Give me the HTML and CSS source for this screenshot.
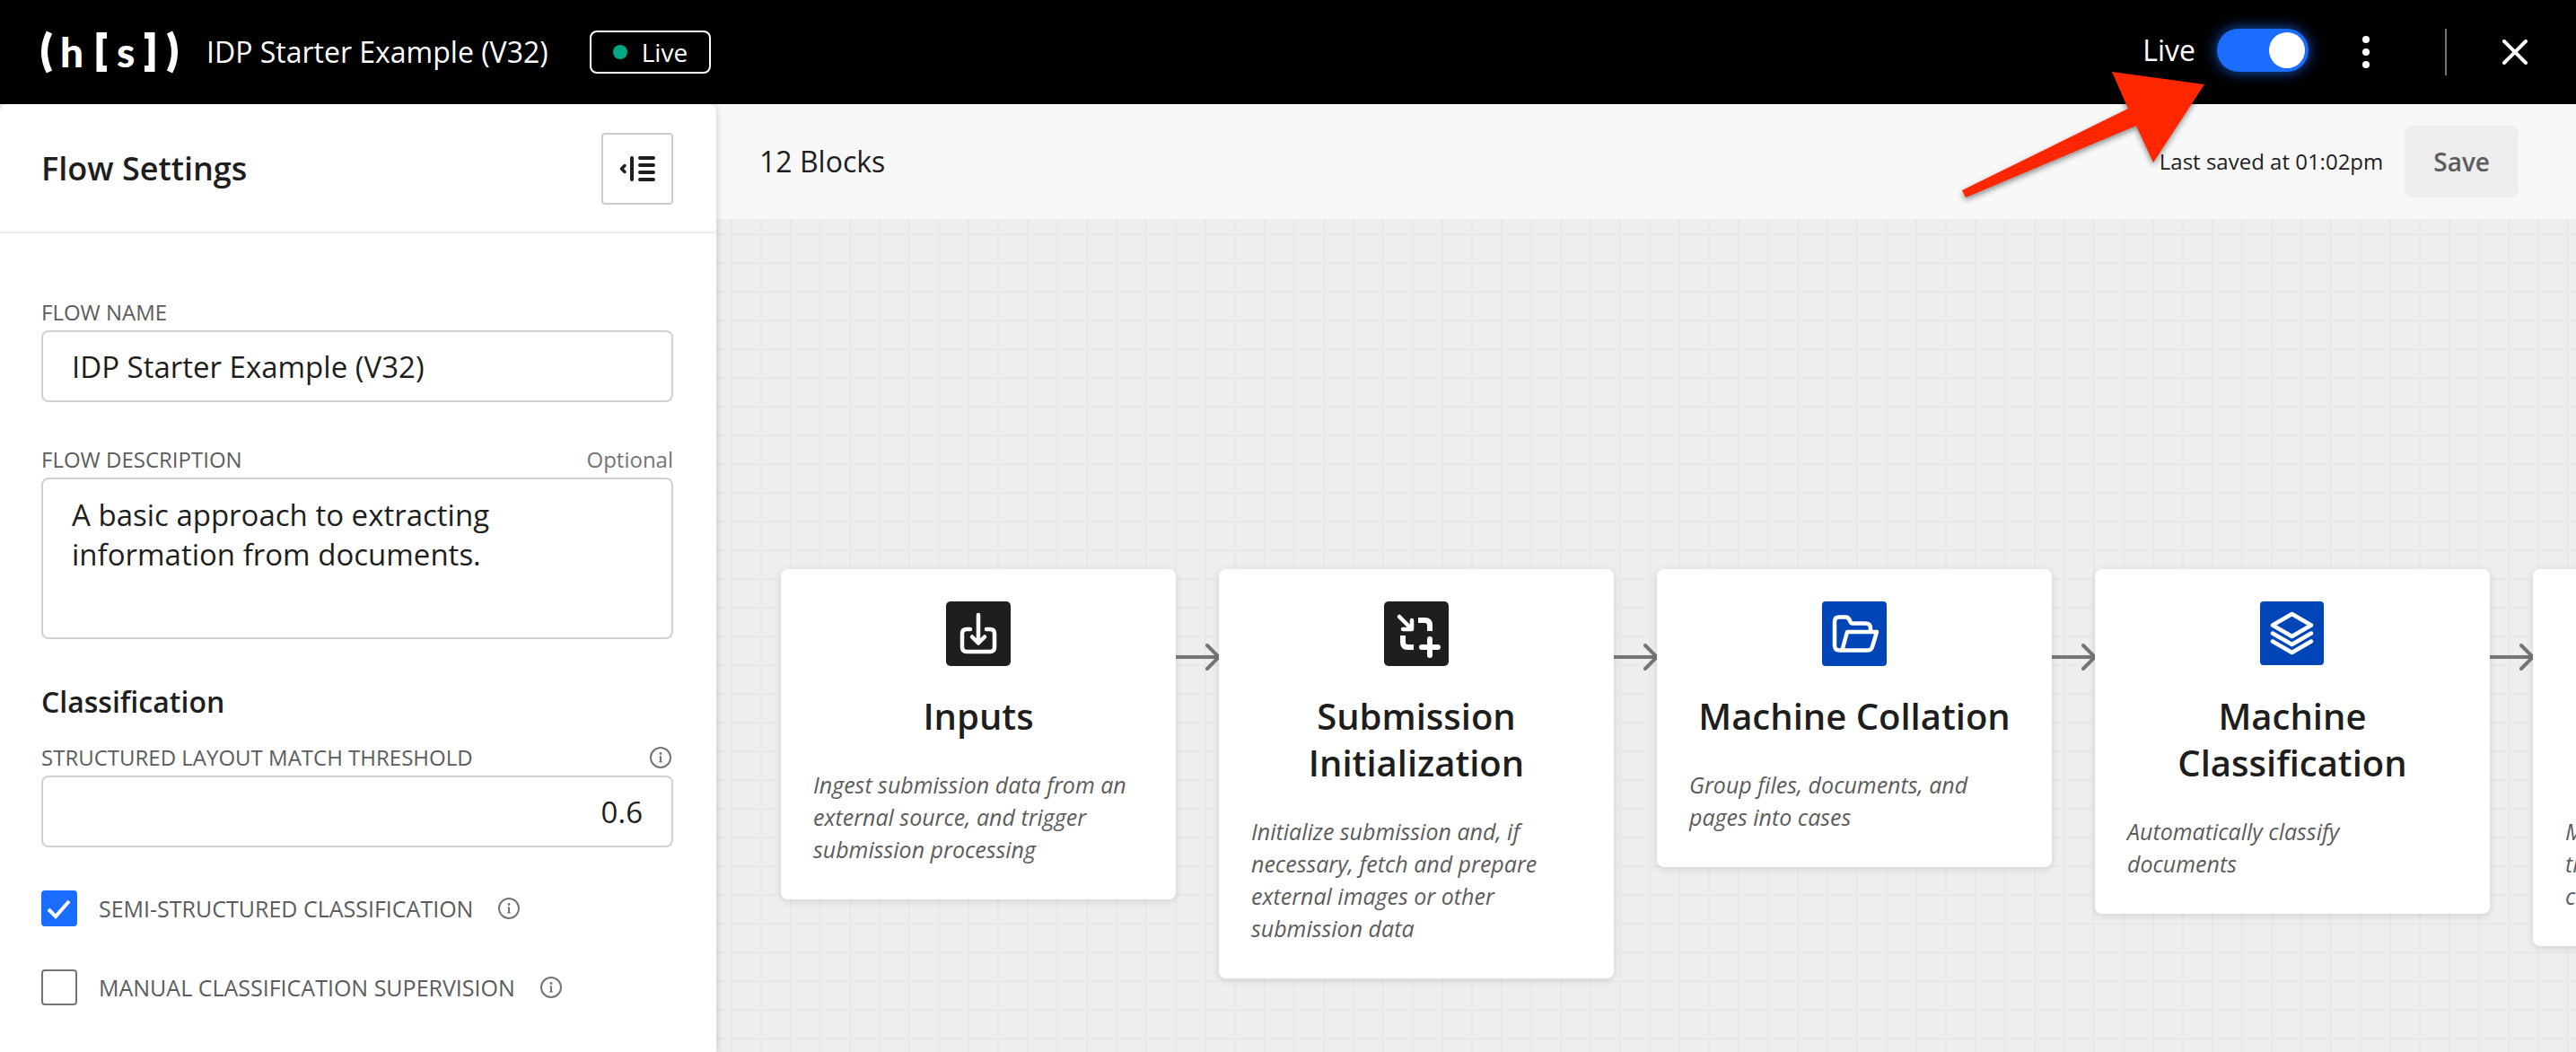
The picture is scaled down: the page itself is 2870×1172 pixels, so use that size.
FILE: index.html
```html
<!DOCTYPE html>
<html lang="en">
<head>
<meta charset="utf-8">
<title>IDP Starter Example (V32)</title>
<meta name="viewport" content="width=device-width, initial-scale=1">
<link rel="stylesheet" href="styles.css">
</head>
<body>
<svg class="sprite" aria-hidden="true">
  <symbol id="info" viewBox="0 0 24 24">
    <circle cx="12" cy="12" r="11" fill="none" stroke="currentColor" stroke-width="2"/>
    <path d="M12 10.500V17" fill="none" stroke="currentColor" stroke-width="2"/>
    <path d="M10.500 11H12M10 17h4" fill="none" stroke="currentColor" stroke-width="1"/>
    <circle cx="12" cy="7.500" r="1.400" fill="currentColor"/>
  </symbol>
  <symbol id="arrow" viewBox="0 0 48 32">
    <path d="M0 16H47" fill="none" stroke="currentColor" stroke-width="4"/>
    <path d="M35 3L48 16L35 29" fill="none" stroke="currentColor" stroke-width="4" stroke-linecap="round" stroke-linejoin="round"/>
  </symbol>
</svg>

<header class="topbar">
  <svg class="logo" viewBox="0 -10 152 64" role="img" aria-label="(h[s])">
    <g fill="none" stroke="#fff">
      <path d="M9 0Q-2 22 9 44" stroke-width="7"/>
      <path d="M73 3.500H65V40.500H73" stroke-width="7"/>
      <path d="M115 3.500H123V40.500H115" stroke-width="7"/>
      <path d="M143 0Q154 22 143 44" stroke-width="7"/>
    </g>
    <text class="logo-text" x="21" y="39">h</text>
    <text class="logo-text" x="84" y="39">s</text>
  </svg>
  <h1 class="topbar-title">IDP Starter Example (V32)</h1>
  <span class="badge"><span class="badge-dot"></span>Live</span>
  <div class="topbar-actions">
    <label class="switch">Live <input class="switch-input" type="checkbox" role="switch" checked></label>
    <button class="icon-button" type="button" aria-label="More options">
      <svg width="8" height="36" viewBox="0 0 8 36" fill="#fff"><circle cx="4" cy="4" r="4"/><circle cx="4" cy="18" r="4"/><circle cx="4" cy="32" r="4"/></svg>
    </button>
    <span class="topbar-divider"></span>
    <button class="icon-button" type="button" aria-label="Close">
      <svg width="28" height="28" viewBox="0 0 28 28" fill="none" stroke="#fff" stroke-width="4" stroke-linecap="round"><path d="M2 2L26 26M26 2L2 26"/></svg>
    </button>
  </div>
  <svg class="pointer" viewBox="0 0 290 160" aria-hidden="true">
    <path d="M276 24L173 10L191 51L6 142L10 150L200 70L219 111Z" fill="#ff2600"/>
  </svg>
</header>

<div class="workspace">
  <aside class="sidebar">
    <div class="sidebar-head">
      <h2 class="sidebar-title">Flow Settings</h2>
      <button class="collapse" type="button" aria-label="Collapse panel">
        <svg width="40" height="28" viewBox="0 0 40 28" fill="none" stroke="#1e1e1e" stroke-width="4" stroke-linecap="round" stroke-linejoin="round"><path d="M6 10.500L2.500 14L6 17.500" stroke-width="3.500"/><path d="M14 2V26M23 2H38M23 10H38M23 18H38M23 26H38"/></svg>
      </button>
    </div>
    <form class="settings">
      <div class="field">
        <div class="field-head"><label for="flow-name">FLOW NAME</label></div>
        <input class="control" id="flow-name" type="text" value="IDP Starter Example (V32)">
      </div>
      <div class="field">
        <div class="field-head"><label for="flow-description">FLOW DESCRIPTION</label><span class="optional">Optional</span></div>
        <textarea class="control control-area" id="flow-description">A basic approach to extracting information from documents.</textarea>
      </div>
      <section class="group">
        <h3 class="group-title">Classification</h3>
        <div class="field">
          <div class="field-head"><label for="threshold">STRUCTURED LAYOUT MATCH THRESHOLD</label><svg class="info info-end"><use href="#info"/></svg></div>
          <input class="control control-number" id="threshold" type="text" inputmode="decimal" value="0.6">
        </div>
      </section>
      <div class="check">
        <input class="check-input" id="semi" type="checkbox" checked>
        <label for="semi">SEMI-STRUCTURED CLASSIFICATION</label>
        <svg class="info"><use href="#info"/></svg>
      </div>
      <div class="check">
        <input class="check-input" id="manual" type="checkbox">
        <label for="manual">MANUAL CLASSIFICATION SUPERVISION</label>
        <svg class="info"><use href="#info"/></svg>
      </div>
    </form>
  </aside>

  <main class="main">
    <div class="toolbar">
      <p class="count">12 Blocks</p>
      <p class="saved">Last saved at 01:02pm</p>
      <button class="save" type="button" disabled>Save</button>
    </div>
    <div class="canvas">
      <div class="flow">
        <article class="block">
          <svg class="block-icon" viewBox="0 0 72 72"><rect width="72" height="72" rx="5" fill="#1e1e1e"/><g fill="none" stroke="#fff" stroke-width="4.500" stroke-linecap="round" stroke-linejoin="round"><path d="M27 31H23q-5 0-5 5V51q0 5 5 5H49q5 0 5-5V36q0-5-5-5H45"/><path d="M36 15V46M29 39.500L36 46.500L43 39.500"/></g></svg>
          <h2 class="block-title">Inputs</h2>
          <p class="block-text">Ingest submission data from an external source, and trigger submission processing</p>
        </article>
        <svg class="arrow"><use href="#arrow"/></svg>
        <article class="block">
          <svg class="block-icon" viewBox="0 0 72 72"><rect width="72" height="72" rx="5" fill="#1e1e1e"/><g fill="none" stroke="#fff" stroke-width="6"><path d="M17 17L30 30M31 21V31H21" stroke-width="4.500" stroke-linecap="round" stroke-linejoin="round"/><path d="M38 21H45.500q5.500 0 5.500 5.500V33"/><path d="M21 38V45.500q0 5.500 5.500 5.500H33"/><path d="M51 42V60M42 51H60" stroke-linecap="round"/></g></svg>
          <h2 class="block-title">Submission Initialization</h2>
          <p class="block-text">Initialize submission and, if necessary, fetch and prepare external images or other submission data</p>
        </article>
        <svg class="arrow"><use href="#arrow"/></svg>
        <article class="block">
          <svg class="block-icon" viewBox="0 0 72 72"><rect width="72" height="72" rx="4" fill="#0045b8"/><g fill="none" stroke="#fff" stroke-width="4.500" stroke-linecap="round" stroke-linejoin="round"><path d="M54 33V30q0-5.500-5.500-5.500H34q-2 0-3-3t-4-4H19q-5 0-5 5V49q0 5.500 5.500 5.500H51q4 0 5-4L61 34H28L22.500 54"/></g></svg>
          <h2 class="block-title">Machine Collation</h2>
          <p class="block-text">Group files, documents, and pages into cases</p>
        </article>
        <svg class="arrow"><use href="#arrow"/></svg>
        <article class="block">
          <svg class="block-icon" viewBox="0 0 72 72"><rect width="71" height="71" rx="4" fill="#0045b8"/><g fill="none" stroke="#fff" stroke-width="4.500" stroke-linecap="round" stroke-linejoin="round"><path d="M35.500 14L57 26.500L35.500 39L14 26.500Z"/><path d="M14 35.500L35.500 48L57 35.500"/><path d="M14 44.500L35.500 57L57 44.500"/></g></svg>
          <h2 class="block-title">Machine Classification</h2>
          <p class="block-text">Automatically classify documents</p>
        </article>
        <svg class="arrow"><use href="#arrow"/></svg>
        <article class="block">
          <svg class="block-icon" viewBox="0 0 72 72"><rect width="72" height="72" rx="4" fill="#0045b8"/></svg>
          <h2 class="block-title">Manual Classification</h2>
          <p class="block-text">Manually classify documents<br>that could not be automatically<br>classified</p>
        </article>
      </div>
    </div>
  </main>
</div>
</body>
</html>
```

FILE: styles.css
```css
* {
  box-sizing: border-box;
}

body {
  margin: 0;
  min-height: 100vh;
  display: flex;
  flex-direction: column;
  overflow-x: hidden;
  background: #f8f8f8;
  color: #1e1e1e;
  font-family: "Open Sans", "Noto Sans", sans-serif;
  font-size: 24px;
  line-height: 32px;
}

h1, h2, h3, p {
  margin: 0;
}

button, input, textarea {
  font: inherit;
  color: inherit;
}

.sprite {
  display: none;
}

/* Top bar */
.topbar {
  position: relative;
  z-index: 3;
  display: flex;
  align-items: center;
  height: 116px;
  padding: 0 44px 0 46px;
  background: #000;
  color: #fff;
}

.logo {
  width: 152px;
  height: 64px;
  margin-right: 32px;
}

.logo-text {
  fill: #fff;
  font-family: Lato, sans-serif;
  font-size: 46px;
  font-weight: 900;
}

.topbar-title {
  margin-right: 46px;
  font-size: 32px;
  font-weight: 400;
  line-height: 44px;
}

.badge {
  display: flex;
  align-items: center;
  gap: 16px;
  height: 48px;
  padding: 0 24px;
  border: 2px solid #fff;
  border-radius: 8px;
  font-size: 28px;
}

.badge-dot {
  width: 16px;
  height: 16px;
  border-radius: 50%;
  background: #00a887;
}

.topbar-actions {
  display: flex;
  align-items: center;
  margin-left: auto;
}

.switch {
  display: flex;
  align-items: center;
  gap: 24px;
  margin: 0 40px 4px 0;
  font-size: 32px;
  line-height: 44px;
}

.switch-input {
  appearance: none;
  display: flex;
  align-items: center;
  justify-content: flex-end;
  width: 102px;
  height: 48px;
  margin: 0;
  padding: 4px;
  border-radius: 24px;
  background: #1a6dff;
  box-shadow: 0 0 16px rgba(26, 109, 255, 0.8);
}

.switch-input::after {
  content: "";
  width: 40px;
  height: 40px;
  border-radius: 50%;
  background: #fff;
}

.icon-button {
  display: flex;
  align-items: center;
  justify-content: center;
  width: 48px;
  height: 48px;
  padding: 0;
  border: 0;
  background: none;
}

.topbar-divider {
  width: 2px;
  height: 52px;
  margin: 0 52px 0 64px;
  background: #757575;
}

.pointer {
  position: absolute;
  top: 70px;
  right: 400px;
  width: 290px;
  height: 160px;
  pointer-events: none;
  filter: drop-shadow(0 3px 3px rgba(0, 0, 0, 0.45));
}

/* Layout below the bar */
.workspace {
  display: flex;
  flex: 1;
}

.sidebar {
  position: relative;
  z-index: 2;
  flex: 0 0 798px;
  border-radius: 8px 8px 0 0;
  background: #fff;
  box-shadow: 0 0 8px rgba(0, 0, 0, 0.2);
}

.sidebar-head {
  display: flex;
  align-items: center;
  justify-content: space-between;
  padding: 32px 48px 30px 46px;
  border-bottom: 2px solid #eee;
}

.sidebar-title {
  font-size: 36px;
  font-weight: 600;
  line-height: 48px;
}

.collapse {
  display: flex;
  align-items: center;
  justify-content: center;
  width: 80px;
  height: 80px;
  padding: 0;
  border: 2px solid #ccc;
  border-radius: 4px;
  background: #fff;
}

.settings {
  display: flex;
  flex-direction: column;
  gap: 48px;
  padding: 72px 48px 48px 46px;
}

.field {
  display: flex;
  flex-direction: column;
  gap: 4px;
}

.field-head {
  display: flex;
  align-items: center;
  justify-content: space-between;
  color: #5c5c5c;
}

.optional {
  color: #757575;
}

.control {
  width: 100%;
  height: 80px;
  padding: 0 32px;
  border: 2px solid #d0d0d0;
  border-radius: 8px;
  background: #fff;
  font-size: 33px;
  line-height: 44px;
}

.control-area {
  display: block;
  height: 180px;
  padding: 18px 32px;
  resize: none;
}

.control-number {
  text-align: right;
}

.group {
  display: flex;
  flex-direction: column;
  gap: 24px;
}

.group-title {
  font-size: 32px;
  font-weight: 600;
  line-height: 44px;
}

.info {
  width: 24px;
  height: 24px;
  color: #757575;
}

.info-end {
  margin-right: 2px;
}

.check {
  display: flex;
  align-items: center;
  gap: 24px;
  color: #5c5c5c;
  font-size: 25px;
}

.check .info {
  margin-left: 4px;
}

.check-input {
  appearance: none;
  width: 40px;
  height: 40px;
  margin: 0;
  border: 2px solid #757575;
  border-radius: 4px;
  background: #fff;
}

.check-input:checked {
  border-color: #1a6dff;
  background: #1a6dff url("data:image/svg+xml,%3Csvg xmlns='http://www.w3.org/2000/svg' viewBox='0 0 36 36'%3E%3Cpath d='M6 19l8 8L29 10' fill='none' stroke='white' stroke-width='4'/%3E%3C/svg%3E") center / 36px no-repeat;
}

/* Flow editor */
.main {
  display: flex;
  flex: 1;
  flex-direction: column;
  min-width: 0;
}

.toolbar {
  display: flex;
  align-items: center;
  height: 128px;
  padding: 0 64px 0 48px;
}

.count {
  margin-right: auto;
  font-size: 32px;
  line-height: 44px;
}

.saved {
  margin-right: 24px;
}

.save {
  height: 80px;
  padding: 0 32px;
  border: 0;
  border-radius: 8px;
  background: #eee;
  color: #5c5c5c;
  font-size: 28px;
  font-weight: 600;
}

.canvas {
  flex: 1;
  padding: 390px 0 80px 72px;
  overflow: hidden;
  background-color: #eee;
  background-image:
    linear-gradient(90deg, #e8e8e8 2px, transparent 2px),
    linear-gradient(#e8e8e8 2px, transparent 2px);
  background-position: 16px 16px;
  background-size: 33px 32px;
}

.flow {
  display: flex;
  align-items: flex-start;
}

.block {
  display: flex;
  flex: 0 0 440px;
  flex-direction: column;
  padding: 36px 36px 38px;
  border-radius: 8px;
  background: #fff;
  box-shadow: 0 2px 8px rgba(0, 0, 0, 0.12);
}

.block-icon {
  align-self: center;
  width: 72px;
  height: 72px;
  margin-bottom: 30px;
}

.block-title {
  margin-bottom: 32px;
  font-size: 40px;
  font-weight: 600;
  line-height: 52px;
  text-align: center;
}

.block-text {
  padding-right: 8px;
  color: #5c5c5c;
  font-size: 25px;
  font-style: italic;
  line-height: 36px;
}

.arrow {
  flex: 0 0 48px;
  height: 32px;
  margin-top: 82px;
  color: #757575;
}
```
